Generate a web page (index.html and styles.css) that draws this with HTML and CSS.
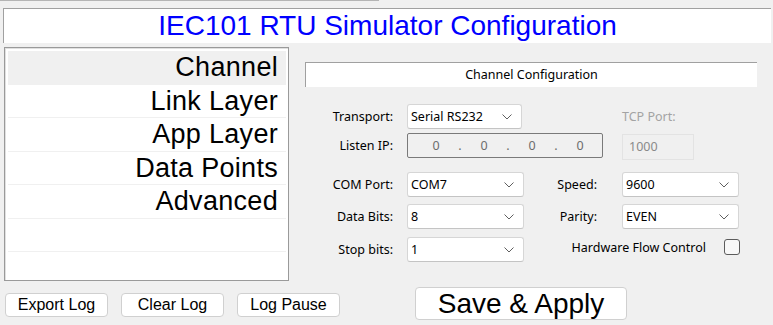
FILE: index.html
```html
<!DOCTYPE html>
<html lang="en">
<head>
    <meta charset="UTF-8">
    <meta name="viewport" content="width=device-width, initial-scale=1.0">
    <title>IEC101 RTU Simulator Configuration</title>
    <link rel="stylesheet" href="styles.css">
</head>
<body>

    <div class="topline"></div>
    <header class="title">IEC101 RTU Simulator Configuration</header>

    <div class="main">
        <ul class="nav">
            <li class="active">Channel</li>
            <li>Link Layer</li>
            <li>App Layer</li>
            <li>Data Points</li>
            <li>Advanced</li>
            <li></li>
            <li></li>
        </ul>

        <section class="panel">
            <div class="panel-title">Channel Configuration</div>
            <div class="form">
                <label class="lbl">Transport:</label>
                <div class="combo short"><span>Serial RS232</span><svg width="10" height="6" viewBox="0 0 10 6"><path d="M0.5 0.5 L5 5 L9.5 0.5" fill="none" stroke="#5f5f5f" stroke-width="1"/></svg></div>
                <span></span>
                <label class="lbl-off">TCP Port:</label>

                <label class="lbl">Listen IP:</label>
                <div class="ip">
                    <span class="oct">0</span><span class="dot">.</span>
                    <span class="oct">0</span><span class="dot">.</span>
                    <span class="oct">0</span><span class="dot">.</span>
                    <span class="oct">0</span>
                </div>
                <div class="port">1000</div>

                <label class="lbl">COM Port:</label>
                <div class="combo"><span>COM7</span><svg width="10" height="6" viewBox="0 0 10 6"><path d="M0.5 0.5 L5 5 L9.5 0.5" fill="none" stroke="#5f5f5f" stroke-width="1"/></svg></div>
                <label class="lbl right">Speed:</label>
                <div class="combo"><span>9600</span><svg width="10" height="6" viewBox="0 0 10 6"><path d="M0.5 0.5 L5 5 L9.5 0.5" fill="none" stroke="#5f5f5f" stroke-width="1"/></svg></div>

                <label class="lbl">Data Bits:</label>
                <div class="combo"><span>8</span><svg width="10" height="6" viewBox="0 0 10 6"><path d="M0.5 0.5 L5 5 L9.5 0.5" fill="none" stroke="#5f5f5f" stroke-width="1"/></svg></div>
                <label class="lbl right">Parity:</label>
                <div class="combo"><span>EVEN</span><svg width="10" height="6" viewBox="0 0 10 6"><path d="M0.5 0.5 L5 5 L9.5 0.5" fill="none" stroke="#5f5f5f" stroke-width="1"/></svg></div>

                <label class="lbl">Stop bits:</label>
                <div class="combo"><span>1</span><svg width="10" height="6" viewBox="0 0 10 6"><path d="M0.5 0.5 L5 5 L9.5 0.5" fill="none" stroke="#5f5f5f" stroke-width="1"/></svg></div>
                <div class="flow">
                    <span>Hardware Flow Control</span>
                    <span class="check"></span>
                </div>
            </div>
        </section>
    </div>

    <div class="actions">
        <button class="btn">Export Log</button>
        <button class="btn">Clear Log</button>
        <button class="btn">Log Pause</button>
        <button class="btn big">Save &amp; Apply</button>
    </div>

</body>
</html>
```

FILE: styles.css
```css
body {
    margin: 0;
    width: 773px;
    height: 325px;
    overflow: hidden;
    background-color: #f0f0f0;
    font-family: "Noto Sans", sans-serif;
    font-size: 12.5px;
    color: #000;
}

.topline {
    width: 379px;
    height: 1px;
    background-color: #b4b4b4;
}

.title {
    margin: 7px 2px 0 3px;
    height: 35px;
    box-sizing: border-box;
    border-top: 1px solid #a0a0a0;
    border-left: 1px solid #a0a0a0;
    background-color: #fff;
    color: #0000ff;
    font-family: "Liberation Sans", Arial, sans-serif;
    font-size: 28px;
    line-height: 34px;
    text-align: center;
}

.main {
    display: flex;
    margin-top: 4px;
    height: 234px;
}

.nav {
    list-style: none;
    margin: 0 0 0 4px;
    padding: 3px 2px 0 3px;
    width: 285px;
    height: 234px;
    box-sizing: border-box;
    border: 1px solid #9a9a9a;
    box-shadow: inset 1px 1px 0 #e0e0e0;
    background-color: #fff;
    overflow: hidden;
    font-family: "Liberation Sans", Arial, sans-serif;
    font-size: 27px;
    letter-spacing: 0.3px;
}
.nav li {
    height: 32.5px;
    line-height: 32.5px;
    border-bottom: 1px solid #f0f0f0;
    padding-right: 8px;
    text-align: right;
}
.nav li.active {
    background-color: #f0f0f0;
}

.panel {
    margin: 15px 0 0 16px;
    width: 452px;
}
.panel-title {
    height: 25px;
    box-sizing: border-box;
    border-top: 1px solid #a0a0a0;
    border-left: 1px solid #a0a0a0;
    background-color: #fff;
    line-height: 24px;
    text-align: center;
}

.form {
    display: grid;
    grid-template-columns: 102px 117px 98px 117px;
    grid-template-rows: 29px 39px 32px 33px 25px;
    align-items: start;
    margin-top: 17px;
}

.lbl, .lbl-off {
    height: 25px;
    display: flex;
    align-items: center;
}
.lbl {
    justify-content: flex-end;
    padding-right: 14px;
}
.lbl.right {
    padding-right: 25px;
}
.lbl-off {
    color: #a3a3a3;
}

.combo {
    height: 25px;
    box-sizing: border-box;
    display: flex;
    align-items: center;
    justify-content: space-between;
    padding: 0 9px 0 3px;
    border: 1px solid #d6d6d6;
    border-bottom-color: #c4c4c4;
    border-radius: 3px;
    background-color: #fff;
}
.combo.short {
    width: 115px;
}

.ip {
    grid-column: 2 / 4;
    width: 196px;
    height: 25px;
    box-sizing: border-box;
    display: flex;
    align-items: center;
    padding-left: 24px;
    border: 1px solid #7a7a7a;
    border-radius: 2px;
    color: #6d6d6d;
}
.ip .oct {
    width: 8px;
    text-align: center;
}
.ip .dot {
    width: 40px;
    text-align: center;
}

.port {
    margin-top: 1px;
    width: 72px;
    height: 26px;
    box-sizing: border-box;
    padding-left: 6px;
    border: 1px solid #e3e3e3;
    color: #8a8a8a;
    line-height: 24px;
}

.flow {
    grid-column: 3 / 5;
    height: 20px;
    margin-right: -1px;
    display: flex;
    align-items: center;
    justify-content: flex-end;
    gap: 18px;
}
.check {
    width: 16px;
    height: 16px;
    box-sizing: border-box;
    border: 1px solid #5c5c5c;
    border-radius: 3px;
    background-color: #f8f8f8;
}

.actions {
    display: flex;
    align-items: flex-start;
    margin-top: 6px;
    padding-left: 5px;
}
.btn {
    margin: 6px 13px 0 0;
    padding: 0;
    width: 103px;
    height: 24px;
    box-sizing: border-box;
    border: 1px solid #d0d0d0;
    border-radius: 4px;
    background-color: #fff;
    color: #000;
    font-family: "Liberation Sans", Arial, sans-serif;
    font-size: 16px;
}
.btn.big {
    margin: 0 0 0 62px;
    width: 212px;
    height: 33px;
    font-size: 28px;
}
```
